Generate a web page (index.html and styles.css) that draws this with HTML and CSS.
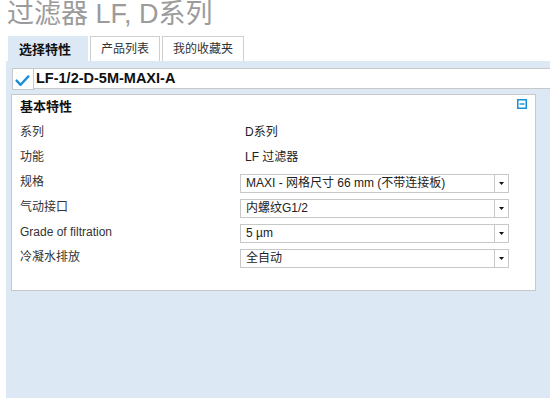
FILE: index.html
```html
<!DOCTYPE html>
<html lang="zh-CN">
<head>
<meta charset="utf-8">
<title>过滤器 LF, D系列</title>
<link rel="stylesheet" href="styles.css">
</head>
<body>
<h1 class="page-title">过滤器 LF, D系列</h1>
<nav class="tabs">
  <div class="tab tab-active">选择特性</div>
  <div class="tab">产品列表</div>
  <div class="tab">我的收藏夹</div>
</nav>
<main class="panel">
  <div class="product-row">
    <div class="check-box">
      <svg width="20" height="20" viewBox="0 0 20 20"><polyline points="3.6,11.6 7.6,15.8 15.4,7.4" fill="none" stroke="#1e8ed6" stroke-width="2.4" stroke-linecap="round" stroke-linejoin="round"/></svg>
    </div>
    <div class="product-code">LF-1/2-D-5M-MAXI-A</div>
  </div>
  <section class="card">
    <header class="card-head">
      <h2 class="card-title">基本特性</h2>
      <svg class="collapse" width="10" height="10" viewBox="0 0 10 10"><rect x="0.75" y="0.75" width="8.5" height="8.5" fill="#fff" stroke="#1a8fd9" stroke-width="1.5"/><line x1="2.5" y1="5" x2="7.5" y2="5" stroke="#1a8fd9" stroke-width="1.4"/></svg>
    </header>
    <div class="props">
      <div class="prop-label">系列</div>
      <div class="prop-value">D系列</div>

      <div class="prop-label">功能</div>
      <div class="prop-value">LF 过滤器</div>

      <div class="prop-label">规格</div>
      <div class="select"><span class="select-text">MAXI - 网格尺寸 66 mm (不带连接板)</span><span class="select-arrow"><svg width="5" height="3" viewBox="0 0 5 3"><polygon points="0,0 5,0 2.5,3" fill="#111"/></svg></span></div>

      <div class="prop-label">气动接口</div>
      <div class="select"><span class="select-text">内螺纹G1/2</span><span class="select-arrow"><svg width="5" height="3" viewBox="0 0 5 3"><polygon points="0,0 5,0 2.5,3" fill="#111"/></svg></span></div>

      <div class="prop-label">Grade of filtration</div>
      <div class="select"><span class="select-text">5 µm</span><span class="select-arrow"><svg width="5" height="3" viewBox="0 0 5 3"><polygon points="0,0 5,0 2.5,3" fill="#111"/></svg></span></div>

      <div class="prop-label">冷凝水排放</div>
      <div class="select"><span class="select-text">全自动</span><span class="select-arrow"><svg width="5" height="3" viewBox="0 0 5 3"><polygon points="0,0 5,0 2.5,3" fill="#111"/></svg></span></div>
    </div>
  </section>
</main>
</body>
</html>
```
FILE: styles.css
```css
html, body {
  margin: 0;
  height: 100%;
}
body {
  font-family: "Liberation Sans", "Noto Sans CJK SC", sans-serif;
  font-size: 12px;
  color: #333;
  background: #fff;
  display: flex;
  flex-direction: column;
  min-height: 100vh;
  overflow: hidden;
}
.page-title {
  margin: 0 0 8px 7px;
  font-size: 27px;
  font-weight: normal;
  line-height: 28px;
  height: 28px;
  color: #9b9b9b;
}
.tabs {
  display: flex;
  gap: 2px;
  margin-left: 8px;
  height: 25px;
}
.tab {
  box-sizing: border-box;
  height: 25px;
  padding: 1px 10px 0;
  line-height: 23px;
  border: 1px solid #cfcfcf;
  border-bottom: none;
  background: #fff;
  color: #333;
  font-size: 12px;
}
.tab-active {
  background: #dce9f5;
  border-color: #dce9f5;
  font-weight: bold;
  color: #111;
  font-size: 13px;
  padding: 1px 16px 0 10px;
}
.panel {
  flex: 1;
  margin-left: 6px;
  background: #dce9f5;
  padding: 7px 0 0 5px;
}
.product-row {
  display: flex;
  align-items: flex-start;
  margin-left: 1px;
}
.check-box {
  box-sizing: border-box;
  width: 22px;
  height: 22px;
  border: 1px solid #c8c8c8;
  background: #fff;
}
.check-box svg {
  display: block;
}
.product-code {
  flex: 1;
  box-sizing: border-box;
  height: 21px;
  border: 1px solid #c8c8c8;
  border-left: none;
  border-right: none;
  background: #fff;
  padding-left: 2px;
  font-size: 14.5px;
  font-weight: bold;
  line-height: 19px;
  color: #111;
}
.card {
  margin: 4px 14px 0 0;
  border: 1px solid #c8c8c8;
  background: #fff;
  padding-bottom: 19px;
}
.card-head {
  display: flex;
  justify-content: space-between;
  align-items: flex-start;
  height: 26px;
  box-sizing: border-box;
  padding: 4px 8px 0 8px;
}
.card-title {
  margin: 0;
  font-size: 13px;
  font-weight: bold;
  line-height: 16px;
  color: #111;
}
.collapse {
  display: block;
}
.props {
  display: grid;
  grid-template-columns: 220px 269px;
  grid-auto-rows: 25px;
  padding-left: 8px;
}
.prop-label {
  padding-top: 3px;
  line-height: 16px;
  color: #333;
}
.prop-value {
  padding: 3px 0 0 5px;
  line-height: 16px;
  color: #222;
}
.select {
  box-sizing: border-box;
  margin-top: 3px;
  height: 19px;
  border: 1px solid #c8c8c8;
  display: flex;
  background: #fff;
}
.select-text {
  flex: 1;
  padding-left: 5px;
  line-height: 17px;
  color: #222;
  white-space: nowrap;
}
.select-arrow {
  width: 13px;
  border-left: 1px solid #c8c8c8;
  display: flex;
  align-items: center;
  justify-content: center;
}
.select-arrow svg {
  display: block;
}
```
